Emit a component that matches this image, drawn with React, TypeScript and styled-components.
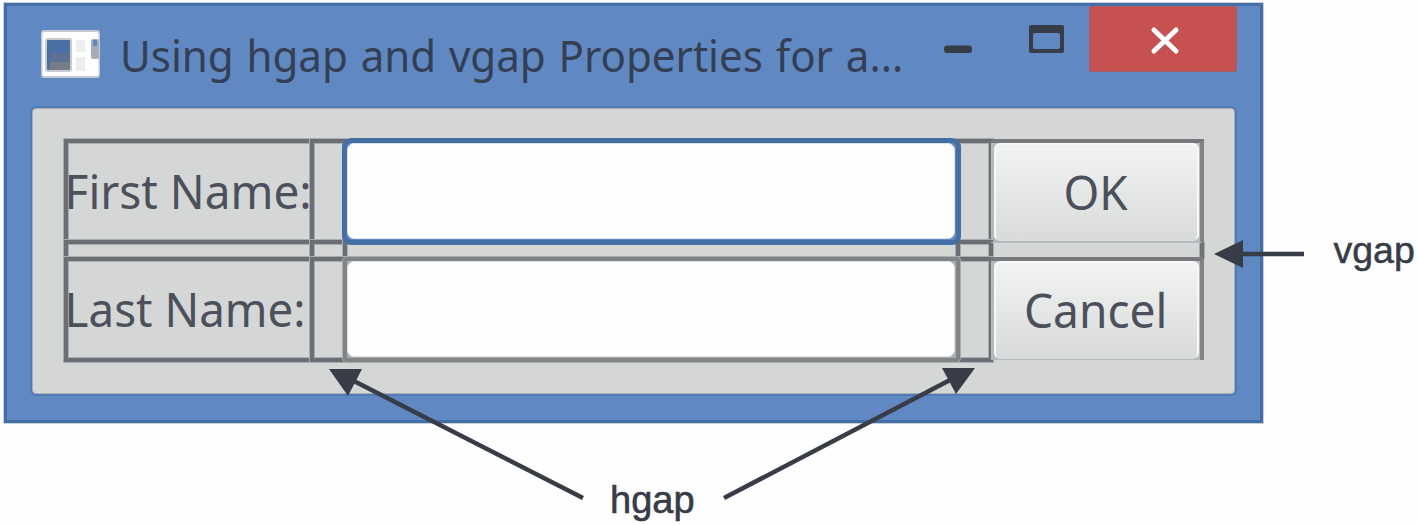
import React from "react";
import styled, { createGlobalStyle } from "styled-components";

const GlobalStyle = createGlobalStyle`
  * { box-sizing: border-box; }
  body { margin: 0; background: #fefefe; overflow: hidden; }
`;

const Page = styled.main`
  position: relative;
  width: 1418px;
  height: 525px;
  padding: 3px 0 0 4px;
  background: #fefefe;
  color: #383c47;
  font-family: "Noto Sans", "Open Sans", sans-serif;
`;

const Row = styled.div`
  display: flex;
  height: 420px;
`;

const Window = styled.section`
  width: 1259px;
  height: 420px;
  flex: none;
  padding: 0 24.5px;
  background: #6088c3;
  border: 3px solid #446ea6;
  box-shadow: 0 0 0 1px #c9d0d8;
`;

const TitleBar = styled.header`
  display: flex;
  height: 102px;
  padding-left: 9.5px;
`;

const AppIcon = styled.svg`
  width: 60px;
  height: 50px;
  margin-top: 23px;
  flex: none;
`;

const Title = styled.h1`
  width: 800px;
  margin: 14px 0 0 19px;
  font-size: 44px;
  line-height: 70px;
  font-weight: 400;
  word-spacing: 2px;
  color: #343f53;
  white-space: nowrap;
`;

const Stretch = styled.span<{ $x: number; $origin?: string }>`
  display: inline-block;
  white-space: nowrap;
  transform: scaleX(${(p) => p.$x});
  transform-origin: ${(p) => p.$origin ?? "left"} center;
`;

const Controls = styled.div`
  display: flex;
  margin-left: auto;
  margin-right: -1px;
`;

const ControlButton = styled.button<{ $width: number; $close?: boolean }>`
  width: ${(p) => p.$width}px;
  height: 66px;
  padding: 0;
  border: ${(p) => (p.$close ? "1px solid #a55d68" : "0")};
  border-radius: 2px;
  background: ${(p) => (p.$close ? "#c75050" : "transparent")};
  svg { display: block; }
`;

const Client = styled.div`
  width: 1203px;
  height: 286px;
  padding: 32.5px 0 0 34px;
  background: #d5d7d6;
  border: 1px solid #a9afb4;
  border-radius: 4px;
  box-shadow: 0 0 0 2px #527bb4;
`;

const FormGrid = styled.div`
  display: grid;
  grid-template-columns: 246px 33px 613px 33px 211px;
  grid-template-rows: 101px 17px 101px;
  margin: -1px 0 0 -1px;
`;

const Cell = styled.div`
  outline: 4px solid #6c6e73;
  outline-offset: -2px;
  box-shadow: 0 0 0 3px #a8adb3, inset 0 0 0 3px #a8adb3;
`;

const LabelCell = styled(Cell).attrs({ as: "label" })`
  display: flex;
  align-items: center;
  text-indent: -1.5px;
  font-size: 48px;
  line-height: 66px;
  color: #4b505b;
`;

const FieldCell = styled(Cell)<{ $focused?: boolean }>`
  position: relative;
  z-index: ${(p) => (p.$focused ? 2 : 0)};
  outline-color: ${(p) => (p.$focused ? "#446ea6" : "#818385")};
  outline-width: ${(p) => (p.$focused ? 5 : 4)}px;
  box-shadow: ${(p) =>
    p.$focused ? "inset 0 0 0 4px #6088c3" : "0 0 0 3px #a8adb3"};
  border-radius: ${(p) => (p.$focused ? 6 : 2)}px;
  background: ${(p) => (p.$focused ? "#6088c3" : "#a8adb3")};
  padding: 2.5px;
`;

const Input = styled.input`
  display: block;
  width: 100%;
  height: 100%;
  border: 1px solid #dfe2e5;
  border-radius: 7px;
  outline: none;
  background: #fefefe;
`;

const ButtonCell = styled.div`
  padding: 2px 3px 1px;
  background: #b4b9bd;
  box-shadow: inset 0 2px 0 #77797c, inset -2px 0 0 #818385,
    0 -2px 0 #77797c, 2px 0 0 #818385, 2px -2px 0 #77797c;
`;

const ButtonGap = styled.div`
  border-top: 1px solid #b4b9bd;
  box-shadow: inset -2px 0 0 #717377, 2px 0 0 #717377,
    inset -3px 0 0 #a8adb3, 3px 0 0 #a8adb3;
`;

const PushButton = styled.button`
  display: block;
  width: 100%;
  height: 100%;
  padding: 0;
  border: 2px solid #f8f8f8;
  border-bottom-color: #d9dbdc;
  border-radius: 6px;
  background: linear-gradient(#f2f3f3, #d9dbdb);
  font: 48px/66px "Noto Sans", "Open Sans", sans-serif;
  color: #4b505b;
`;

const VgapLabel = styled.span`
  margin: 225px 0 0 70.5px;
  font: 37.5px/44px "Liberation Sans", Arial, sans-serif;
  -webkit-text-stroke: 0.5px #383c47;
`;

const HgapLabel = styled.div`
  margin: 55px 0 0 606px;
  font: 38px/44px "Liberation Sans", Arial, sans-serif;
  -webkit-text-stroke: 0.6px #383c47;
`;

const Arrows = styled.svg`
  position: absolute;
  z-index: 3;
  left: 0;
  top: 0;
  pointer-events: none;
`;

export default function App() {
  return (
    <Page>
      <GlobalStyle />
      <Row>
        <Window>
          <TitleBar>
            <AppIcon viewBox="0 0 60 50">
              <rect x="0" y="1" width="59" height="48" rx="3" fill="#c3c9d0" />
              <rect x="1.5" y="3" width="56" height="44" rx="2" fill="#fdfdfd" />
              <rect x="4" y="9" width="27" height="34" rx="3" fill="#c7cbcf" />
              <rect x="6" y="11" width="23" height="30" rx="1" fill="#4a6fa4" />
              <path d="M10 24H29V41H8Z" fill="#5d7293" />
              <path d="M10 33H29V41H8Z" fill="#777d88" />
              <path d="M35 11H44V23H35ZM35 28H44V42H35Z" fill="#eceeef" />
              <rect x="50" y="10" width="8" height="20" rx="2" fill="#a8adb5" />
              <rect x="52" y="11" width="4" height="6" fill="#6088c3" />
            </AppIcon>
            <Title><Stretch $x={0.956}>Using hgap and vgap Properties for a...</Stretch></Title>
            <Controls>
              <ControlButton $width={86} aria-label="Minimize">
                <svg width="86" height="66"><rect x="1" y="39.5" width="28" height="7.5" rx="3" fill="#383c47" /></svg>
              </ControlButton>
              <ControlButton $width={60} aria-label="Maximize">
                <svg width="60" height="66"><path fillRule="evenodd" d="M2 19H33Q35 19 35 21V45Q35 47 33 47H2Q0 47 0 45V21Q0 19 2 19ZM6 27Q4 27 4 29V41Q4 43 6 43H29Q31 43 31 41V29Q31 27 29 27Z" fill="#383c47" /></svg>
              </ControlButton>
              <ControlButton $width={148} $close aria-label="Close">
                <svg width="146" height="64"><path d="M64 23L86 44M86 23L64 44" stroke="#fefefe" strokeWidth="5" strokeLinecap="round" /></svg>
              </ControlButton>
            </Controls>
          </TitleBar>
          <Client>
            <FormGrid>
              <LabelCell><Stretch $x={0.957}>First Name:</Stretch></LabelCell>
              <Cell />
              <FieldCell $focused><Input aria-label="First Name" /></FieldCell>
              <Cell />
              <ButtonCell><PushButton><Stretch $x={0.955} $origin="center">OK</Stretch></PushButton></ButtonCell>
              <Cell /><Cell /><Cell /><Cell /><ButtonGap />
              <LabelCell><Stretch $x={0.952}>Last Name:</Stretch></LabelCell>
              <Cell />
              <FieldCell><Input aria-label="Last Name" /></FieldCell>
              <Cell />
              <ButtonCell><PushButton><Stretch $x={0.96} $origin="center">Cancel</Stretch></PushButton></ButtonCell>
            </FormGrid>
          </Client>
        </Window>
        <VgapLabel>vgap</VgapLabel>
      </Row>
      <HgapLabel>hgap</HgapLabel>
      <Arrows width="1418" height="525" viewBox="0 0 1418 525">
        <g stroke="#383c47" strokeWidth="4.5" fill="none">
          <path d="M1240 254H1304" />
          <path d="M350 379L583 498" />
          <path d="M952 379L724 498" />
        </g>
        <g fill="#383c47">
          <path d="M1214 254L1243 240V268Z" />
          <path d="M329 369H362L348 396Z" />
          <path d="M975 368L942 368L956 394Z" />
        </g>
      </Arrows>
    </Page>
  );
}
